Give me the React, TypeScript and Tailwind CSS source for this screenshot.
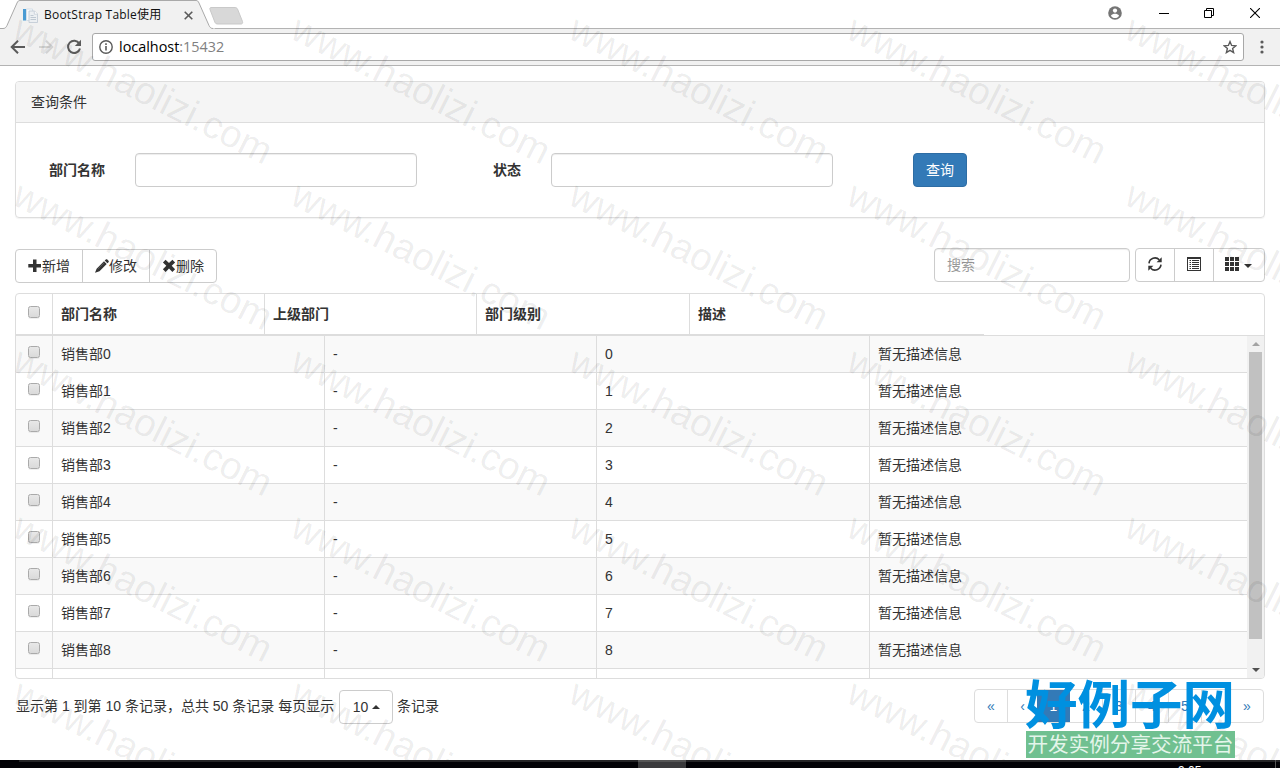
import React from "react";

const columns = ["部门名称", "上级部门", "部门级别", "描述"];

const rows = Array.from({ length: 10 }, (_, i) => ({
  name: `销售部${i}`,
  parent: "-",
  level: String(i),
  desc: "暂无描述信息",
}));

const pages = [
  { label: "«", cls: "w-[32px]" },
  { label: "‹", cls: "w-[30px] border-l" },
  { label: "1", cls: "w-[33px] bg-[#337ab7] text-white" },
  { label: "2", cls: "w-[32px]" },
  { label: "3", cls: "w-[33px] border-l" },
  { label: "4", cls: "w-[33px] border-l" },
  { label: "5", cls: "w-[33px] border-l" },
  { label: "›", cls: "w-[29px] border-l" },
  { label: "»", cls: "w-[33px] border-l" },
];

const stampRows = [0, 1, 2, 3, 4];
const stampCols = [0, 1, 2, 3, 4];

function Checkbox() {
  return (
    <span className="block w-[12px] h-[12px] rounded-[2.5px] border border-[#aaa] bg-gradient-to-b from-[#e8e8e8] to-[#dadada] shadow-[0_1px_0_rgba(0,0,0,0.06)]" />
  );
}

function BrowserChrome() {
  return (
    <header className="shrink-0">
      {/* Tab strip */}
      <div className="relative h-[29px] bg-white border-b border-[#b3b3b3] flex justify-between">
        <svg className="absolute left-0 top-0" width="250" height="29">
          <path d="M0 28.5H3c2 0 3-1 4-3L17 3c1-2 1.5-2.5 3-2.500H196c1.500 0 2 .5 3 2.500l10 22.500c1 2 2 3 4 3h2V29H0z" fill="#f1f1f1" />
          <path d="M0 28.5H3c2 0 3-1 4-3L17 3c1-2 1.5-2.5 3-2.500H196c1.500 0 2 .5 3 2.500l10 22.500c1 2 2 3 4 3" fill="none" stroke="#a9a9a9" />
          <path d="M211 7.500h24c1 0 2 .5 2.500 1.500l5 12.500c.4 1.500 0 2.500-1.500 2.500h-23c-1.500 0-2.500-.5-3-1.500l-5-13c-.4-1 0-2 1-2z" fill="#d8d8d8" stroke="#c9c9c9" />
        </svg>
        <div className="relative flex items-center pl-[23px] h-[29px]">
          <svg width="15" height="15" viewBox="0 0 15 15" className="mt-px">
            <path d="M0 1h3v11.500H0z" fill="#4a9bd3" />
            <path d="M3.500 1h6v11.500h-6z" fill="#f7f9fb" stroke="#cdd9e4" strokeWidth=".8" />
            <path d="M6 3h5.500L14.500 6v8.500H6z" fill="#eceff2" stroke="#c3ccd6" strokeWidth=".9" />
            <path d="M11.300 3v3.200h3.200" fill="#fff" stroke="#c3ccd6" strokeWidth=".8" />
            <path d="M7.500 7.500h3M7.500 9.500h5.500M7.500 11.500h5.500" stroke="#bfc8d2" />
          </svg>
          <span className="pl-[6px] w-[146px] text-[12px] text-[#111] whitespace-nowrap font-['Open_Sans','Noto_Sans_CJK_SC',sans-serif] tracking-[0.22px]">
            BootStrap Table使用
          </span>
          <svg width="9" height="9" viewBox="0 0 9 9" className="mt-px">
            <path d="M.7.7l7.600 7.600M8.300.7L.7 8.300" stroke="#5a5a5a" strokeWidth="1.600" />
          </svg>
        </div>
        <div className="flex items-center h-[26px] pr-[20px]">
          <svg width="14" height="14" viewBox="0 0 14 14" className="mr-[37px]">
            <circle cx="7" cy="7" r="6.800" fill="#757575" />
            <circle cx="7" cy="4.600" r="2.100" fill="#fff" />
            <path d="M2.900 9.700C3.800 8.200 5.500 7.700 7 7.700s3.200.5 4.100 2C10.200 11.200 8.700 12 7 12s-3.200-.8-4.100-2.300z" fill="#fff" />
          </svg>
          <svg width="10" height="10" viewBox="0 0 10 10" className="mr-[35px]">
            <path d="M0 5.500h10" stroke="#000" />
          </svg>
          <svg width="10" height="10" viewBox="0 0 10 10" className="mr-[36px]">
            <path d="M.5 2.500h7v7h-7zM2.500 2.500v-2h7v7h-2" fill="none" stroke="#000" />
          </svg>
          <svg width="10" height="10" viewBox="0 0 10 10">
            <path d="M0 0l10 10M10 0L0 10" stroke="#000" strokeWidth="1.100" />
          </svg>
        </div>
      </div>

      {/* Address bar */}
      <div className="h-[37px] bg-[#f1f1f1] border-b border-[#b3b3b3] flex items-center pl-[10px]">
        <svg width="16" height="16" viewBox="0 0 16 16" className="mr-3">
          <path d="M15 8H2.500M8 1.700L1.700 8 8 14.300" fill="none" stroke="#5a5a5a" strokeWidth="2" />
        </svg>
        <svg width="16" height="16" viewBox="0 0 16 16" className="mr-3">
          <path d="M1 8h12.500M8 1.700L14.300 8 8 14.300" fill="none" stroke="#d2d2d2" strokeWidth="2" />
        </svg>
        <svg width="16" height="16" viewBox="0 0 16 16" className="mr-[10px]">
          <path d="M13.300 4.600A6.100 6.100 0 1 0 14 9.500" fill="none" stroke="#5a5a5a" strokeWidth="2" />
          <path d="M15 .8V7H8.800z" fill="#5a5a5a" />
        </svg>
        <div className="w-[1152px] h-7 bg-white border border-[#a8a8a8] rounded-[3px] flex items-center px-[6px]">
          <svg width="14" height="14" viewBox="0 0 14 14">
            <circle cx="7" cy="7" r="6.200" fill="none" stroke="#5a5a5a" strokeWidth="1.400" />
            <path d="M6.200 6h1.600v4.500H6.200zM6.200 3.300h1.600v1.600H6.200z" fill="#5a5a5a" />
          </svg>
          <span className="ml-[6px] text-[14.4px] leading-none text-black font-['Open_Sans',sans-serif]">
            localhost<span className="text-[#808080]">:15432</span>
          </span>
          <svg width="14" height="14" viewBox="0 0 14 14" className="ml-auto">
            <path d="M7 1.600l1.600 3.800 4.200.4-3.200 2.700 1 4.100L7 10.400l-3.600 2.200 1-4.100L1.200 5.800l4.200-.4z" fill="none" stroke="#5a5a5a" strokeWidth="1.400" />
          </svg>
        </div>
        <svg width="4" height="14" viewBox="0 0 4 14" className="ml-[16px]">
          <circle cx="2" cy="2" r="1.600" fill="#5a5a5a" />
          <circle cx="2" cy="7" r="1.600" fill="#5a5a5a" />
          <circle cx="2" cy="12" r="1.600" fill="#5a5a5a" />
        </svg>
      </div>
    </header>
  );
}

function SearchPanel() {
  const input = "w-[282px] h-[34px] rounded border border-[#ccc] bg-white shadow-[inset_0_1px_1px_rgba(0,0,0,0.075)]";
  return (
    <section className="h-[137px] border border-[#ddd] rounded shadow-[0_1px_1px_rgba(0,0,0,0.05)]">
      <div className="h-[41px] bg-[#f5f5f5] border-b border-[#ddd] rounded-t-[3px] px-[15px] leading-[40px]">查询条件</div>
      <div className="flex items-center h-[34px] mt-[30px]">
        <label className="w-[119px] pl-[33px] font-bold">部门名称</label>
        <div className={input} />
        <label className="w-[134px] pl-[76px] font-bold">状态</label>
        <div className={input} />
        <button className="ml-[80px] w-[54px] h-[34px] rounded bg-[#337ab7] border border-[#2e6da4] text-white">查询</button>
      </div>
    </section>
  );
}

function TableToolbar() {
  const cell = "flex items-center justify-center h-full border-l border-[#ccc] first:border-l-0";
  return (
    <div className="flex justify-between mt-[30px]">
      <div className="mt-px flex w-[202px] h-[34px] border border-[#ccc] rounded bg-white">
        <button className={`${cell} w-[66px]`}>
          <svg width="14" height="14" viewBox="0 0 14 14">
            <path d="M5 .5h3.500v4.500H13v3.500H8.500V13H5V8.500H.3V5H5z" fill="#333" />
          </svg>
          新增
        </button>
        <button className={`${cell} w-[67px]`}>
          <svg width="14" height="14" viewBox="0 0 14 14">
            <path d="M10.800.5c.5-.5 1-.5 1.500 0l1.200 1.200c.5.5.5 1 0 1.500L12.400 4.300 9.700 1.600zM9 2.300l2.700 2.700-7.200 7.200L0 13.800 1.600 9.700z" fill="#333" />
            <path d="M2.800 10l6.400-6.300" stroke="#888" strokeWidth=".5" />
          </svg>
          修改
        </button>
        <button className={`${cell} w-[67px]`}>
          <svg width="14" height="14" viewBox="0 0 14 14">
            <path d="M3.600.7L7 4.100 10.400.7l2.700 2.700L9.700 6.800l3.400 3.500-2.700 2.700L7 9.500 3.600 13 .9 10.300l3.400-3.500L.9 3.400z" fill="#333" />
          </svg>
          删除
        </button>
      </div>
      <div className="flex gap-[5px]">
        <div className="w-[196px] h-[34px] border border-[#ccc] rounded px-3 leading-8 text-[#999] shadow-[inset_0_1px_1px_rgba(0,0,0,0.075)]">
          搜索
        </div>
        <div className="flex w-[130px] h-[34px] border border-[#ccc] rounded">
          <button className={`${cell} w-[38px] pb-0.5`}>
            <svg width="14" height="14" viewBox="0 0 14 14">
              <path d="M1 6.300A6 6 0 0 1 11.300 2.800M13 7.700A6 6 0 0 1 2.700 11.200" fill="none" stroke="#333" strokeWidth="1.600" />
              <path d="M13.700.2V5.300H8.600zM.3 13.800V8.700h5.100z" fill="#333" />
            </svg>
          </button>
          <button className={`${cell} w-[39px] pb-0.5`}>
            <svg width="14" height="14" viewBox="0 0 14 14">
              <path d="M0 0h14v14H0z" fill="#333" />
              <path d="M1 2h12v11H1z" fill="#fff" />
              <path d="M2.500 3.500h1.500M2.500 5.500h1.500M2.500 7.500h1.500M2.500 9.500h1.500M2.500 11.500h1.500M5 3.500h7M5 5.500h7M5 7.500h7M5 9.500h7M5 11.500h7" stroke="#333" />
            </svg>
          </button>
          <button className={`${cell} flex-1 pr-px`}>
            <svg width="14" height="14" viewBox="0 0 14 14" className="mb-0.5">
              <path d="M0 0h4v4H0zM5 0h4v4H5zM10 0h4v4h-4zM0 5h4v4H0zM5 5h4v4H5zM10 5h4v4h-4zM0 10h4v4H0zM5 10h4v4H5zM10 10h4v4h-4z" fill="#333" />
            </svg>
            <span className="ml-[5px] mt-0.5 border-x-4 border-t-4 border-x-transparent border-t-[#333]" />
          </button>
        </div>
      </div>
    </div>
  );
}

function DataTable() {
  return (
    <section className="mt-[10px] h-[386px] border border-[#ddd] rounded overflow-hidden flex flex-col">
      {/* The fixed header keeps its own narrower column widths */}
      <div className="h-[42px] shrink-0 border-b border-[#ddd]">
        <div className="flex w-[968px] h-[41px] border-b border-[#ddd] font-bold">
          <div className="w-[36px] pl-3 pt-3">
            <Checkbox />
          </div>
          {columns.map((c, i) => (
            <div
              key={c}
              className={`${i === 2 ? "w-[213px]" : i === 3 ? "flex-1" : "w-[212px]"} border-l border-[#ddd] pl-2 leading-[41px]`}
            >
              {c}
            </div>
          ))}
        </div>
      </div>
      <div className="flex flex-1 min-h-0">
        <div className="flex-1 overflow-hidden">
          {rows.map((r) => (
            <div key={r.name} className="flex h-[37px] border-b border-[#ddd] odd:bg-[#f9f9f9] leading-[36px]">
              <div className="w-[36px] pl-3 pt-[10px]">
                <Checkbox />
              </div>
              <div className="w-[272px] border-l border-[#ddd] pl-2">{r.name}</div>
              <div className="w-[272px] border-l border-[#ddd] pl-2">{r.parent}</div>
              <div className="w-[273px] border-l border-[#ddd] pl-2">{r.level}</div>
              <div className="flex-1 border-l border-[#ddd] pl-2">{r.desc}</div>
            </div>
          ))}
        </div>
        <div className="w-[17px] bg-[#f1f1f1] flex flex-col items-center">
          <span className="mt-[6px] border-x-4 border-b-4 border-x-transparent border-b-[#a3a3a3]" />
          <span className="mt-[6px] w-[13px] h-[287px] bg-[#c1c1c1]" />
          <span className="mt-auto mb-[6px] border-x-4 border-t-4 border-x-transparent border-t-[#505050]" />
        </div>
      </div>
    </section>
  );
}

function TableFooter() {
  return (
    <div className="flex justify-between mt-[10px] pr-px">
      <div className="flex items-center mt-px h-[34px] pl-px whitespace-pre">
        <span className="mr-px pb-0.5">显示第 1 到第 10 条记录，总共 50 条记录 每页显示 </span>
        <button className="w-[54px] h-[34px] pl-px border border-[#ccc] rounded flex items-center justify-center">
          10
          <span className="ml-1 border-x-4 border-b-4 border-x-transparent border-b-[#333]" />
        </button>
        <span className="pb-0.5"> 条记录</span>
      </div>
      <div className="flex w-[290px] h-[34px] border border-[#ddd] rounded overflow-hidden text-[#337ab7]">
        {pages.map((p) => (
          <span key={p.label} className={`h-full shrink-0 text-center leading-8 border-[#ddd] ${p.cls}`}>
            {p.label}
          </span>
        ))}
      </div>
    </div>
  );
}

function Watermarks() {
  return (
    <div className="absolute inset-0 overflow-hidden pointer-events-none">
      {stampRows.map((r) =>
        stampCols.map((c) => (
          <span
            key={`${r}-${c}`}
            className="absolute origin-top-left rotate-[26.7deg] text-[38.4px] leading-none text-black/[0.075] font-['Liberation_Sans',sans-serif] whitespace-nowrap"
            style={{ left: 25 + c * 278, top: 8.5 + r * 166 }}
          >
            www.haolizi.com
          </span>
        ))
      )}
    </div>
  );
}

function SiteLogo() {
  return (
    <div className="absolute left-[1025px] top-[674px] w-[210px]">
      <div className="h-[57px] text-[52.5px] leading-[54px] font-bold text-[#0090e0] font-['Noto_Sans_CJK_SC',sans-serif] whitespace-nowrap">
        好例子网
      </div>
      <div className="ml-px w-[209px] h-[27px] bg-[#70c090] text-[#e4f5ea] text-[20.6px] leading-[25px] text-center font-['Noto_Sans_CJK_SC',sans-serif] whitespace-nowrap">
        开发实例分享交流平台
      </div>
    </div>
  );
}

export default function App() {
  return (
    <div className="relative w-[1280px] h-[768px] overflow-hidden bg-white flex flex-col text-[14px] leading-5 text-[#333] font-['Liberation_Sans','Noto_Sans_CJK_SC',sans-serif]">
      <BrowserChrome />
      <main className="flex-1 px-[15px] pt-[15px]">
        <SearchPanel />
        <TableToolbar />
        <DataTable />
        <TableFooter />
      </main>
      <Watermarks />
      <SiteLogo />
      {/* Taskbar edge */}
      <footer className="relative h-2 bg-[#020206] flex shrink-0 overflow-hidden">
        <div className="ml-[19px] w-[619px] h-0.5 bg-[#242426]" />
        <div className="w-[48px] h-2 bg-[#3a3a3c] border-t-2 border-[#555]" />
        <div className="flex-1 h-0.5 bg-[#242426]" />
        <span className="absolute left-[1178px] top-[5px] text-[12px] leading-none text-white">9:05</span>
        <span className="absolute left-[1275px] top-0 w-px h-2 bg-[#555]" />
      </footer>
    </div>
  );
}
